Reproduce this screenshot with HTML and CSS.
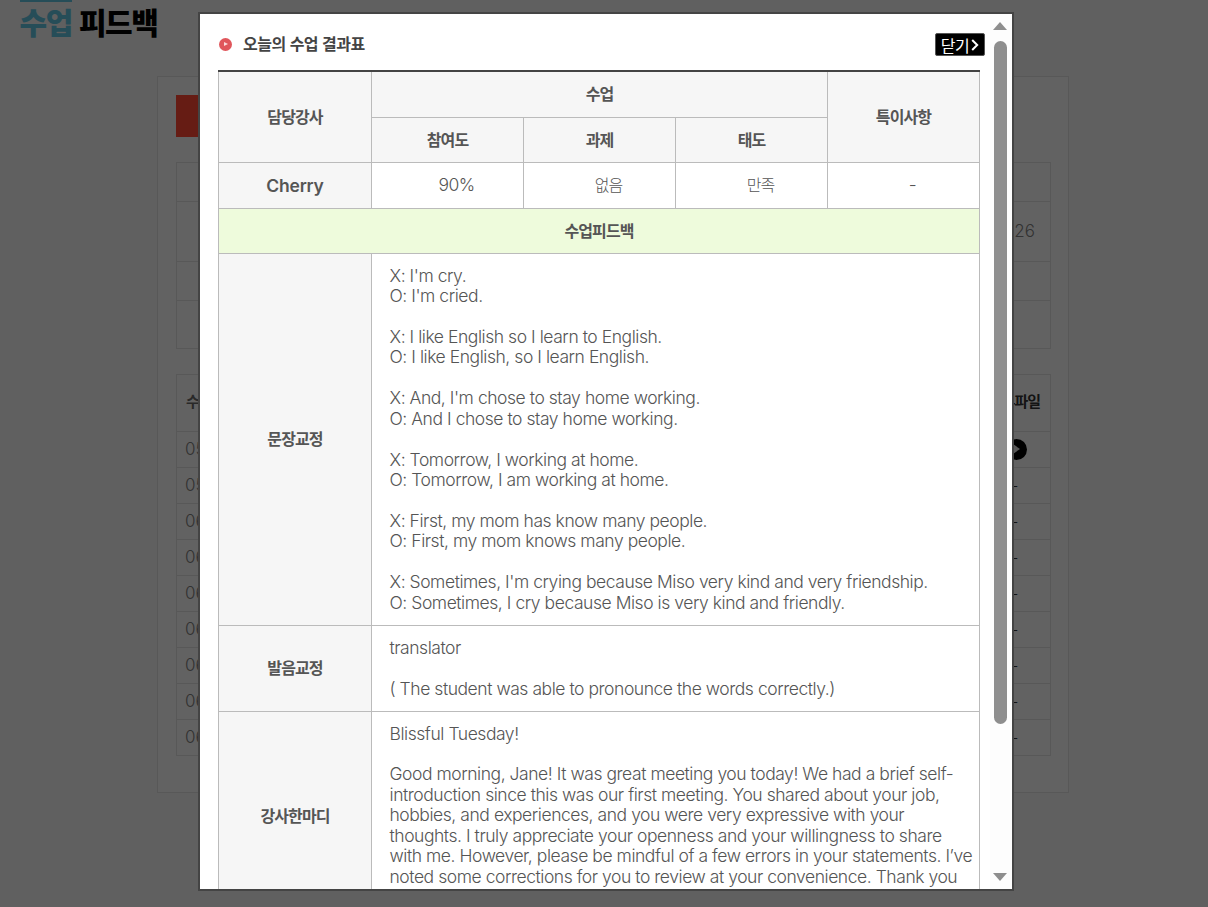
FILE: index.html
```html
<!DOCTYPE html>
<html lang="ko">
<head>
<meta charset="utf-8">
<title>수업 피드백</title>
<link rel="stylesheet" href="styles.css">
</head>
<body>
<div class="page">
  <h1 class="page-title"><span class="accent">수업</span> 피드백</h1>
  <section class="panel">
    <div class="red-tab">수업 피드백</div>
    <table class="bg-table info">
      <tr class="r1"><th>수강과정</th><th>기간</th></tr>
      <tr class="r2"><td>화상영어</td><td class="end">2024.05.26</td></tr>
      <tr class="r3"><th>강사</th><th>횟수</th></tr>
      <tr class="r4"><td>Cherry</td><td></td></tr>
    </table>
    <table class="bg-table list">
      <tr class="head"><th>수업일</th><th class="last">첨부파일</th></tr>
      <tr><td>05.28</td><td class="last"><span class="play"></span></td></tr>
      <tr><td>05.30</td><td class="last">-</td></tr>
      <tr><td>06.04</td><td class="last">-</td></tr>
      <tr><td>06.06</td><td class="last">-</td></tr>
      <tr><td>06.11</td><td class="last">-</td></tr>
      <tr><td>06.13</td><td class="last">-</td></tr>
      <tr><td>06.18</td><td class="last">-</td></tr>
      <tr><td>06.20</td><td class="last">-</td></tr>
      <tr><td>06.25</td><td class="last">-</td></tr>
    </table>
  </section>
</div>
<div class="overlay"></div>
<div class="modal">
  <header class="modal-head">
    <h2 class="modal-title"><span class="bullet"></span>오늘의 수업 결과표</h2>
    <button class="close">닫기<svg class="chev" width="8" height="12" viewBox="0 0 8 12"><path d="M1.2 1l5 5-5 5" fill="none" stroke="#fff" stroke-width="2"/></svg></button>
  </header>
  <table class="result">
    <colgroup><col class="c1"><col class="c"><col class="c"><col class="c"><col class="c"></colgroup>
    <tr class="h46"><th rowspan="2" class="short">담당강사</th><th colspan="3">수업</th><th rowspan="2" class="short">특이사항</th></tr>
    <tr class="h45"><th class="short">참여도</th><th class="short">과제</th><th class="short">태도</th></tr>
    <tr class="h46"><th class="name">Cherry</th><td class="val">90%</td><td class="val ko">없음</td><td class="val ko">만족</td><td class="val">-</td></tr>
    <tr class="h45"><th colspan="5" class="green short">수업피드백</th></tr>
    <tr><th>문장교정</th><td colspan="4" class="text">X: I'm cry.<br>O: I'm cried.<br><br>X: I like English so I learn to English.<br>O: I like English, so I learn English.<br><br>X: And, I'm chose to stay home working.<br>O: And I chose to stay home working.<br><br>X: Tomorrow, I working at home.<br>O: Tomorrow, I am working at home.<br><br>X: First, my mom has know many people.<br>O: First, my mom knows many people.<br><br>X: Sometimes, I'm crying because Miso very kind and very friendship.<br>O: Sometimes, I cry because Miso is very kind and friendly.</td></tr>
    <tr><th>발음교정</th><td colspan="4" class="text tight">translator<br><br>( The student was able to pronounce the words correctly.)</td></tr>
    <tr class="h210"><th>강사한마디</th><td colspan="4" class="text top">Blissful Tuesday!<br><br>Good morning, Jane! It was great meeting you today! We had a brief self-<br>introduction since this was our first meeting. You shared about your job,<br>hobbies, and experiences, and you were very expressive with your<br>thoughts. I truly appreciate your openness and your willingness to share<br>with me. However, please be mindful of a few errors in your statements. I’ve<br>noted some corrections for you to review at your convenience. Thank you</td></tr>
  </table>
  <div class="scrollbar">
    <span class="sb-btn"><span class="tri-up"></span></span>
    <div class="sb-track"><div class="sb-thumb"></div></div>
    <span class="sb-btn down"><span class="tri-down"></span></span>
  </div>
</div>
</body>
</html>
```

FILE: styles.css
```css
* { box-sizing: border-box; }
html, body { margin: 0; height: 100%; overflow: hidden; }
body { background: #f0f0f0; font-family: "Noto Sans CJK KR", "Noto Sans", sans-serif; color: #666; }

.page { width: 1208px; height: 907px; }
.page-title {
  margin: 0 0 0 19.5px;
  height: 76px;
  font-size: 30px;
  line-height: 42px;
  font-weight: 900;
  letter-spacing: -1.4px;
  color: #000;
}
.accent { display: inline-block; height: 42px; border-top: 2px solid #60c0dc; color: #60c0dc; line-height: 38px; }

.panel {
  margin-left: 157px;
  width: 912px;
  height: 717px;
  border: 1px solid #dcdcdc;
  background: #f6f6f6;
  padding: 18px 17px 0 18px;
}
.red-tab { width: 140px; height: 42px; background: #ff4632; color: #fff; line-height: 42px; text-align: center; font-weight: 700; }
.bg-table { width: 875px; border-collapse: collapse; table-layout: fixed; font-family: Inter, "Noto Sans CJK KR", sans-serif; }
.bg-table th, .bg-table td { border: 1px solid #dcdcdc; padding: 0 8px 2px; text-align: left; font-size: 17px; font-weight: 300; }
.bg-table th { font-family: "Noto Sans CJK KR", sans-serif; font-weight: 700; font-size: 15px; letter-spacing: -1px; color: #666; }
.info { margin-top: 25px; }
.info th, .info td { text-align: center; }
.info .r1 { height: 39px; }
.info .r2 { height: 60px; }
.info .r3 { height: 39px; }
.info .r4 { height: 48px; }
.info .end { text-align: right; padding-right: 15px; color: #7d7d7d; }
.list { margin-top: 25px; }
.list tr { height: 36px; }
.list .head { height: 57px; }
.list .head th { padding-bottom: 6px; }
.list th:first-child { padding-left: 9px; }
.list td { color: #7d7d7d; }
.list .last { width: 72px; text-align: center; padding: 0; color: #333; }
.play {
  position: relative;
  display: inline-block; width: 21px; height: 21px; border-radius: 50%; background: #000;
  vertical-align: middle; margin-left: 4px;
}
.play::after {
  content: ""; position: absolute; left: 7px; top: 5px;
  border-left: 7px solid #ddd; border-top: 5.5px solid transparent; border-bottom: 5.5px solid transparent;
}

.overlay { position: fixed; inset: 0; background: rgba(0,0,0,.6); }

.modal {
  position: fixed;
  left: 198px;
  top: 12px;
  width: 816px;
  height: 879px;
  border: 2px solid #444;
  background: #fff;
  overflow: hidden;
  padding: 0 27px 0 18px;
  font-family: Inter, "Noto Sans CJK KR", sans-serif;
}

.scrollbar {
  position: absolute; top: 0; right: 0; bottom: 0; width: 22px;
  display: flex; flex-direction: column;
  background: #fdfdfd;
}
.sb-btn { display: block; height: 27px; flex: none; padding: 8px 0 0 3px; }
.sb-btn.down { padding-top: 11px; }
.sb-track { flex: 1; }
.sb-thumb { width: 13px; height: 683px; margin-left: 4px; border-radius: 7px; background: #8e8e8e; }
.tri-up, .tri-down { display: block; width: 0; height: 0; border-left: 7.5px solid transparent; border-right: 7.5px solid transparent; }
.tri-up { border-bottom: 8px solid #8e8e8e; }
.tri-down { border-top: 8px solid #8e8e8e; }

.modal-head { display: flex; align-items: center; justify-content: space-between; height: 56px; padding: 2px 0 0 1px; }
.modal-title {
  display: flex; align-items: center; margin: 0;
  font: 700 16px "Noto Sans CJK KR", sans-serif;
  letter-spacing: -.5px;
  color: #444;
}
.bullet {
  position: relative;
  width: 13px; height: 13px; border-radius: 50%; background: #e0565b; margin: 3px 11px 0 0; flex: none;
}
.bullet::after {
  content: ""; position: absolute; left: 5px; top: 4px;
  border-left: 4px solid #fbdada; border-top: 2.5px solid transparent; border-bottom: 2.5px solid transparent;
}
.close {
  display: flex; align-items: center; gap: 2px; justify-content: center;
  width: 50px; height: 23px; padding: 0; margin-top: 3px;
  background: #000; color: #fff; border: 1px solid #555; border-radius: 2px;
  font: 400 16px "Noto Sans CJK KR", sans-serif; letter-spacing: -.5px;
}

.result {
  width: 762px;
  table-layout: fixed;
  border-collapse: collapse;
  border-top: 2px solid #444;
  color: #555;
}
.result .c1 { width: 153px; }
.result .c { width: 152px; }
.result th, .result td { border: 1px solid #bbb; }
.result tr:first-child th { border-top: 0; }
.result th {
  background: #f6f6f6;
  font: 700 16px "Noto Sans CJK KR", sans-serif;
  letter-spacing: -.9px;
  color: #555;
  padding: 0 0 3px;
  text-align: center;
}
.result th.short { padding-bottom: 1px; }
.h45 { height: 45px; }
.h46 { height: 46px; }
.h210 { height: 210px; }
.result .name { font: 600 17.5px Inter, sans-serif; letter-spacing: -.2px; padding: 0; }
.result .green { background: #eefbdc; }
.val { text-align: center; padding: 0 0 2px 18px; font: 300 17.5px Inter, "Noto Sans CJK KR", sans-serif; letter-spacing: -.5px; }
.val.ko { font: 300 16px "Noto Sans CJK KR", sans-serif; letter-spacing: -1px; }
.text {
  padding: 12px 0 12px 17.5px;
  font-size: 17.5px;
  line-height: 20.45px;
  font-weight: 300;
  letter-spacing: -.45px;
  white-space: nowrap;
  overflow: hidden;
}
.text.tight { padding-bottom: 11px; }
.text.top { vertical-align: top; }
```
